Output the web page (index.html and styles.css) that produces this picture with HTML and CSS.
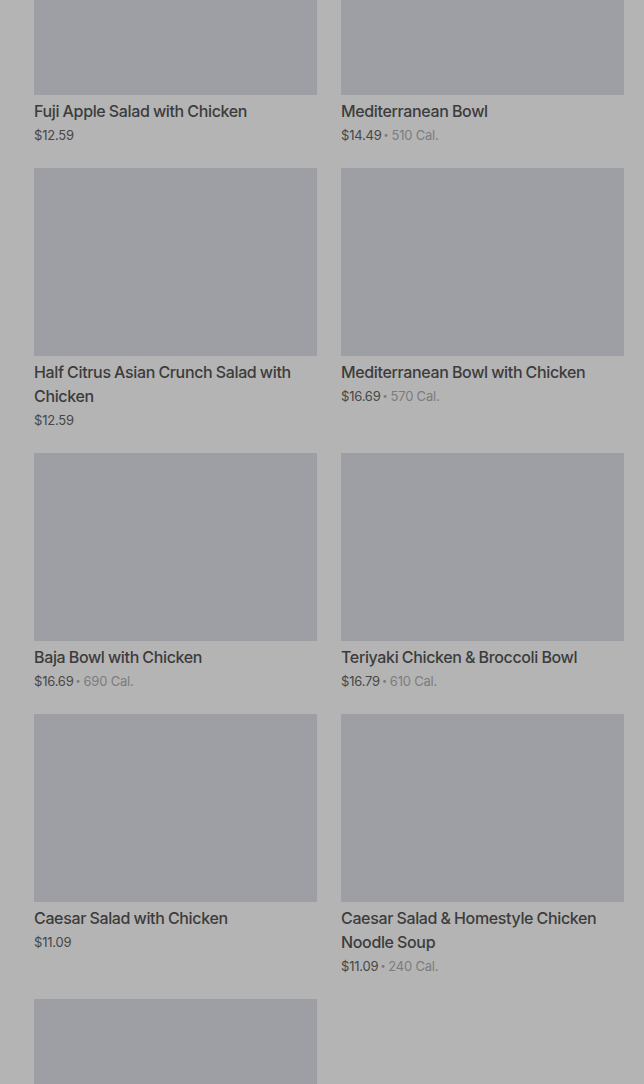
FILE: index.html
```html
<!DOCTYPE html>
<html lang="en">

<head>
    <meta charset="UTF-8">
    <meta name="viewport" content="width=device-width, initial-scale=1.0">
    <title>Menu</title>
    <link rel="stylesheet" href="styles.css">
</head>

<body>
    <div class="page">
        <ul class="menu">
            <li class="item">
                <div class="pic"></div>
                <div class="name">Fuji Apple Salad with Chicken</div>
                <div class="meta"><span class="price">$12.59</span></div>
            </li>
            <li class="item">
                <div class="pic"></div>
                <div class="name">Mediterranean Bowl</div>
                <div class="meta"><span class="price">$14.49</span><span class="dot">•</span><span class="cal">510 Cal.</span></div>
            </li>
            <li class="item">
                <div class="pic"></div>
                <div class="name">Half Citrus Asian Crunch Salad with Chicken</div>
                <div class="meta"><span class="price">$12.59</span></div>
            </li>
            <li class="item">
                <div class="pic"></div>
                <div class="name">Mediterranean Bowl with Chicken</div>
                <div class="meta"><span class="price">$16.69</span><span class="dot">•</span><span class="cal">570 Cal.</span></div>
            </li>
            <li class="item">
                <div class="pic"></div>
                <div class="name">Baja Bowl with Chicken</div>
                <div class="meta"><span class="price">$16.69</span><span class="dot">•</span><span class="cal">690 Cal.</span></div>
            </li>
            <li class="item">
                <div class="pic"></div>
                <div class="name">Teriyaki Chicken &amp; Broccoli Bowl</div>
                <div class="meta"><span class="price">$16.79</span><span class="dot">•</span><span class="cal">610 Cal.</span></div>
            </li>
            <li class="item">
                <div class="pic"></div>
                <div class="name">Caesar Salad with Chicken</div>
                <div class="meta"><span class="price">$11.09</span></div>
            </li>
            <li class="item">
                <div class="pic"></div>
                <div class="name">Caesar Salad &amp; Homestyle Chicken Noodle Soup</div>
                <div class="meta"><span class="price">$11.09</span><span class="dot">•</span><span class="cal">240 Cal.</span></div>
            </li>
            <li class="item">
                <div class="pic"></div>
            </li>
        </ul>
    </div>
</body>

</html>
```

FILE: styles.css
```css
* {
    margin: 0;
    padding: 0;
    box-sizing: border-box;
}

html,
body {
    height: 100%;
    overflow: hidden;
}

body {
    background: #b4b4b4;
    font-family: Inter, "Noto Sans", sans-serif;
    color: #3f3f3f;
}

.page {
    padding: 0 20px 0 34px;
}

/* page is scrolled, first row of pictures is cut off */
.menu {
    list-style: none;
    margin-top: -93px;
    display: grid;
    grid-template-columns: 283px 283px;
    column-gap: 24px;
    row-gap: 21px;
    align-items: start;
}

.pic {
    height: 188px;
    background: #9e9fa5;
    margin-bottom: 4px;
}

.name {
    font-size: 16px;
    line-height: 24px;
    font-weight: 500;
    color: #3c3c3c;
    letter-spacing: -0.35px;
    word-spacing: -0.5px;
}

.meta {
    font-size: 13px;
    line-height: 24px;
    display: flex;
    align-items: center;
    letter-spacing: -0.2px;
}

.price {
    color: #474747;
}

.dot {
    font-size: 9px;
    color: #7a7a7a;
    margin: 0 3px 0 2px;
}

.cal {
    color: #7c7c7c;
}
```
